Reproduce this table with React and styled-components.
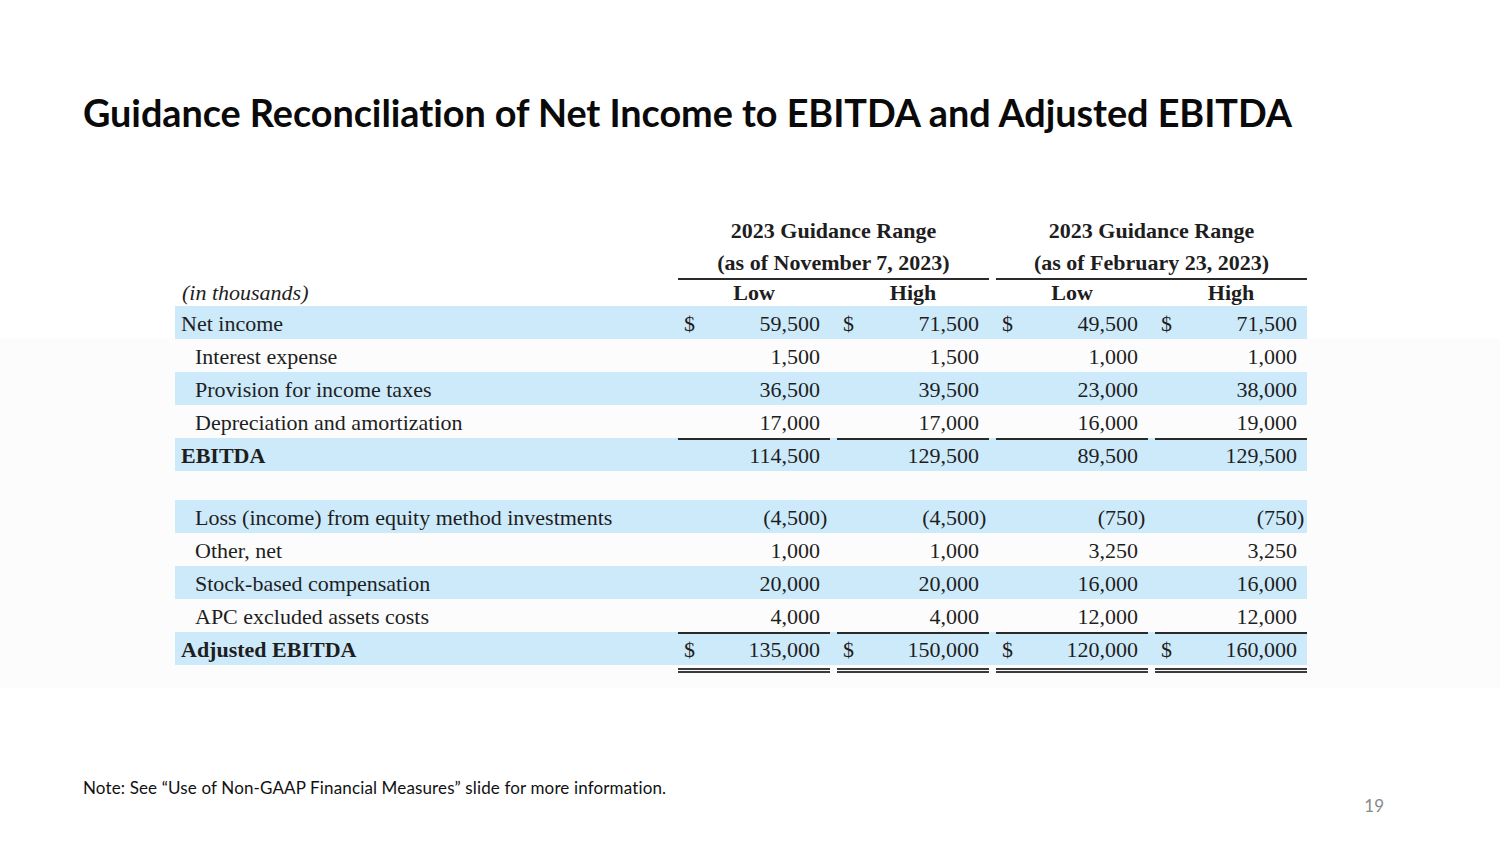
import React from "react";
import styled, { createGlobalStyle } from "styled-components";

const GlobalStyle = createGlobalStyle`
  html, body { margin: 0; padding: 0; background: #ffffff; }
  * { box-sizing: border-box; }
`;

const Slide = styled.div`
  width: 1500px;
  height: 844px;
  display: flex;
  flex-direction: column;
  background: linear-gradient(
    to bottom,
    #ffffff 0px,
    #ffffff 338px,
    #fcfcfc 338px,
    #fcfcfc 688px,
    #ffffff 688px
  );
  font-family: Lato, "Liberation Sans", sans-serif;
  overflow: hidden;
`;

const Title = styled.h1`
  margin: 90px 0 0 83px;
  font-family: Lato, "Liberation Sans", sans-serif;
  font-weight: 700;
  font-size: 37.8px;
  line-height: 46px;
  letter-spacing: -0.05px;
  color: #0a0a0a;
`;

const TableWrap = styled.div`
  margin: 79px 0 0 175px;
  font-family: "Liberation Serif", "Times New Roman", serif;
  font-size: 22px;
  color: #1e1e1e;
`;

const COLS = "496px 152px 152px 152px 152px";

const Row = styled.div`
  display: grid;
  grid-template-columns: ${COLS};
  column-gap: 7px;
  width: 1132px;
  height: ${(p) => p.$h || 33}px;
  background: ${(p) => (p.$blue ? "#cdeafb" : "transparent")};
`;

const GroupHead = styled.div`
  grid-column: span 2;
  display: flex;
  flex-direction: column;
  align-items: center;
  border-bottom: 2px solid #2a2a2a;
  font-weight: 700;
`;

const GroupLine = styled.div`
  line-height: ${(p) => p.$lh}px;
  height: ${(p) => p.$lh}px;
  white-space: nowrap;
`;

const SubHead = styled.div`
  text-align: center;
  font-weight: 700;
  line-height: 26px;
`;

const Units = styled.div`
  padding-left: 7px;
  font-style: italic;
  line-height: 26px;
`;

const Label = styled.div`
  padding: 2px 0 0 ${(p) => (p.$indent ? 20 : 6)}px;
  line-height: 31px;
  font-weight: ${(p) => (p.$bold ? 700 : 400)};
  white-space: nowrap;
`;

const ValueCell = styled.div`
  display: grid;
  grid-template-columns: auto 1fr 9px;
  padding: 2px 1px 0 6px;
  line-height: 31px;
  border-bottom: ${(p) => (p.$rule ? "2px solid #2a2a2a" : "none")};
`;

const Dollar = styled.span`
  text-align: left;
`;

const Num = styled.span`
  text-align: right;
`;

const Suffix = styled.span`
  text-align: left;
`;

const DoubleRuleRow = styled.div`
  display: grid;
  grid-template-columns: ${COLS};
  column-gap: 7px;
  width: 1132px;
  margin-top: 3px;
`;

const DoubleRule = styled.div`
  height: 5px;
  border-top: 2px solid #3a3a3a;
  border-bottom: 2px solid #3a3a3a;
`;

const Spacer = styled.div`
  height: 29px;
`;

const Footer = styled.div`
  display: flex;
  justify-content: space-between;
  align-items: flex-start;
  margin-top: 105px;
  padding: 0 116px 0 83px;
`;

const Note = styled.div`
  font-size: 17px;
  line-height: 20px;
  letter-spacing: 0.14px;
  color: #111;
`;

const PageNum = styled.div`
  margin-top: 17px;
  font-size: 17px;
  line-height: 22px;
  color: #8a8a8a;
`;

const rows = [
  { label: "Net income", blue: true, dollar: true, v: ["59,500", "71,500", "49,500", "71,500"] },
  { label: "Interest expense", indent: true, v: ["1,500", "1,500", "1,000", "1,000"] },
  { label: "Provision for income taxes", indent: true, blue: true, v: ["36,500", "39,500", "23,000", "38,000"] },
  { label: "Depreciation and amortization", indent: true, rule: true, v: ["17,000", "17,000", "16,000", "19,000"] },
  { label: "EBITDA", bold: true, blue: true, v: ["114,500", "129,500", "89,500", "129,500"] },
  { spacer: true },
  { label: "Loss (income) from equity method investments", indent: true, blue: true, neg: true, v: ["4,500", "4,500", "750", "750"] },
  { label: "Other, net", indent: true, v: ["1,000", "1,000", "3,250", "3,250"] },
  { label: "Stock-based compensation", indent: true, blue: true, v: ["20,000", "20,000", "16,000", "16,000"] },
  { label: "APC excluded assets costs", indent: true, rule: true, v: ["4,000", "4,000", "12,000", "12,000"] },
  { label: "Adjusted EBITDA", bold: true, blue: true, dollar: true, v: ["135,000", "150,000", "120,000", "160,000"] },
];

export default function App() {
  return (
    <>
      <GlobalStyle />
      <Slide>
        <Title>Guidance Reconciliation of Net Income to EBITDA and Adjusted EBITDA</Title>
        <TableWrap>
          <Row $h={65}>
            <div />
            <GroupHead>
              <GroupLine $lh={32}>2023 Guidance Range</GroupLine>
              <GroupLine $lh={31}>(as of November 7, 2023)</GroupLine>
            </GroupHead>
            <GroupHead>
              <GroupLine $lh={32}>2023 Guidance Range</GroupLine>
              <GroupLine $lh={31}>(as of February 23, 2023)</GroupLine>
            </GroupHead>
          </Row>
          <Row $h={26}>
            <Units>(in thousands)</Units>
            <SubHead>Low</SubHead>
            <SubHead>High</SubHead>
            <SubHead>Low</SubHead>
            <SubHead>High</SubHead>
          </Row>
          {rows.map((r, i) =>
            r.spacer ? (
              <Spacer key={i} />
            ) : (
              <Row key={i} $blue={r.blue}>
                <Label $indent={r.indent} $bold={r.bold}>
                  {r.label}
                </Label>
                {r.v.map((val, j) => (
                  <ValueCell key={j} $rule={r.rule}>
                    <Dollar>{r.dollar ? "$" : ""}</Dollar>
                    <Num>{r.neg ? `(${val}` : val}</Num>
                    <Suffix>{r.neg ? ")" : ""}</Suffix>
                  </ValueCell>
                ))}
              </Row>
            )
          )}
          <DoubleRuleRow>
            <div />
            <DoubleRule />
            <DoubleRule />
            <DoubleRule />
            <DoubleRule />
          </DoubleRuleRow>
        </TableWrap>
        <Footer>
          <Note>Note: See “Use of Non-GAAP Financial Measures” slide for more information.</Note>
          <PageNum>19</PageNum>
        </Footer>
      </Slide>
    </>
  );
}
